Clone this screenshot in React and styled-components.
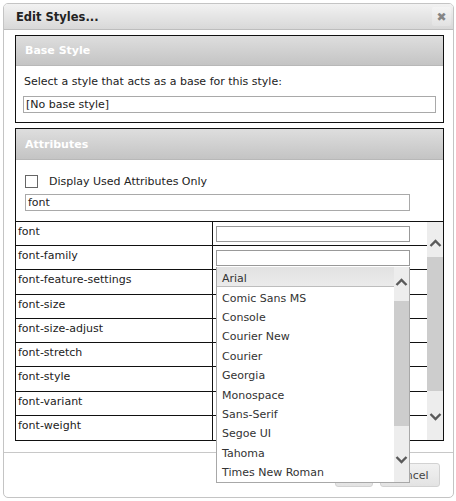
import React from 'react';
import styled, {createGlobalStyle} from 'styled-components';

const ATTRIBUTES = [
    'font',
    'font-family',
    'font-feature-settings',
    'font-size',
    'font-size-adjust',
    'font-stretch',
    'font-style',
    'font-variant',
    'font-weight',
];

const FONTS = [
    'Arial',
    'Comic Sans MS',
    'Console',
    'Courier New',
    'Courier',
    'Georgia',
    'Monospace',
    'Sans-Serif',
    'Segoe UI',
    'Tahoma',
    'Times New Roman',
];

const Chevron = ({down}) => (
    <svg width="13" height="9" viewBox="0 0 13 9">
        <path d={down ? 'M1.5 2 L6.5 7 L11.5 2' : 'M1.5 7 L6.5 2 L11.5 7'}
              fill="none" stroke="#5a5a5a" strokeWidth="2.4"/>
    </svg>
);

const App = () => {
    return (
        <>
            <GlobalStyle/>
            <Dialog>
                <TitleBar>
                    <Title>Edit Styles...</Title>
                    <CloseButton>&#x2716;</CloseButton>
                </TitleBar>
                <Content>
                    <Panel>
                        <PanelHeader height={30}>Base Style</PanelHeader>
                        <BaseBody>
                            <Label>Select a style that acts as a base for this style:</Label>
                            <TextBox width={413}>[No base style]</TextBox>
                        </BaseBody>
                    </Panel>
                    <Panel>
                        <PanelHeader height={31}>Attributes</PanelHeader>
                        <FilterBody>
                            <CheckRow>
                                <CheckBox/>
                                <span>Display Used Attributes Only</span>
                            </CheckRow>
                            <TextBox width={385}>font</TextBox>
                        </FilterBody>
                        <TableArea>
                            <Rows>
                                {ATTRIBUTES.map((name, i) => (
                                    <Row key={name} last={i === ATTRIBUTES.length - 1}>
                                        <NameCell>{name}</NameCell>
                                        <ValueCell>
                                            {i < 2 && <ValueInput/>}
                                            {name === 'font-family' && (
                                                <DropList>
                                                    <Options>
                                                        {FONTS.map((font, j) => (
                                                            <Option key={font} selected={j === 0}>{font}</Option>
                                                        ))}
                                                    </Options>
                                                    <ScrollBar>
                                                        <Arrow size={34} pad="0 0 4px">
                                                            <Chevron/>
                                                        </Arrow>
                                                        <Track>
                                                            <Thumb style={{height: 125}}/>
                                                        </Track>
                                                        <Arrow size={38} pad="0 0 8px">
                                                            <Chevron down/>
                                                        </Arrow>
                                                    </ScrollBar>
                                                </DropList>
                                            )}
                                        </ValueCell>
                                    </Row>
                                ))}
                            </Rows>
                            <ScrollBar wide>
                                <Arrow size={35} pad="8px 0 0">
                                    <Chevron/>
                                </Arrow>
                                <Track>
                                    <Thumb style={{height: 134}}/>
                                </Track>
                                <Arrow size={36} pad="0 0 10px">
                                    <Chevron down/>
                                </Arrow>
                            </ScrollBar>
                        </TableArea>
                    </Panel>
                </Content>
                <Footer>
                    <Button width={38}>OK</Button>
                    <Button width={60}>Cancel</Button>
                </Footer>
            </Dialog>
        </>
    );
};

const GlobalStyle = createGlobalStyle`
  *, *::before, *::after {
    box-sizing: border-box;
  }

  body {
    margin: 0;
    background: #fff;
    font-family: "DejaVu Sans", Verdana, sans-serif;
    font-size: 11px;
    color: #222;
  }
`;

const Dialog = styled.div`
  margin: 3px;
  width: 451px;
  height: 495px;
  border: 1px solid #c4c4c4;
  border-radius: 5px;
  background: #fff;
  display: flex;
  flex-direction: column;
`;

const TitleBar = styled.div`
  height: 26px;
  border-bottom: 1px solid #bdbdbd;
  border-radius: 4px 4px 0 0;
  background: linear-gradient(#f2f2f2, #d8d8d8);
  display: flex;
  align-items: center;
  justify-content: space-between;
  padding: 0 2px 0 12px;
`;

const Title = styled.span`
  font-weight: bold;
  font-size: 11.5px;
  color: #222;
`;

const CloseButton = styled.span`
  width: 19px;
  height: 19px;
  background: linear-gradient(#f4f4f4, #e2e2e2);
  border-radius: 2px;
  color: #858585;
  font-size: 12px;
  display: flex;
  align-items: center;
  justify-content: center;
`;

const Content = styled.div`
  padding: 5px 9px 0 11px;
  display: flex;
  flex-direction: column;
  gap: 5px;
`;

const Panel = styled.div`
  border: 1px solid #111;
`;

const PanelHeader = styled.div`
  height: ${props => props.height}px;
  border-bottom: 1px solid #b8b8b8;
  background: linear-gradient(#dedede, #c4c4c4);
  color: #fff;
  font-weight: bold;
  font-size: 11px;
  display: flex;
  align-items: center;
  padding-left: 9px;
`;

const BaseBody = styled.div`
  padding: 9px 7px 9px 7px;
  display: flex;
  flex-direction: column;
  gap: 7px;
`;

const Label = styled.div`
  line-height: 14px;
  padding-left: 1px;
`;

const TextBox = styled.div`
  width: ${props => props.width}px;
  height: 17px;
  border: 1px solid #a9a9a9;
  padding-left: 2px;
  line-height: 15px;
`;

const FilterBody = styled.div`
  padding: 15px 7px 10px 9px;
  display: flex;
  flex-direction: column;
  gap: 6px;
`;

const CheckRow = styled.div`
  display: flex;
  align-items: center;
  gap: 11px;
  height: 13px;
`;

const CheckBox = styled.span`
  width: 13px;
  height: 13px;
  border: 1px solid #666;
  background: #fff;
`;

const TableArea = styled.div`
  display: flex;
  border-top: 1px solid #111;
`;

const Rows = styled.div`
  flex: 1;
`;

const Row = styled.div`
  height: 24.22px;
  display: grid;
  grid-template-columns: 197px 1fr;
  border-bottom: ${props => props.last ? 'none' : '1px solid #111'};
`;

const NameCell = styled.div`
  border-right: 1px solid #111;
  padding: 3px 0 0 2px;
  line-height: 14px;
`;

const ValueCell = styled.div`
  position: relative;
  padding: 4px 0 0 3px;
`;

const ValueInput = styled.div`
  width: 194px;
  height: 16px;
  border: 1px solid #999;
  background: #fff;
`;

const DropList = styled.div`
  position: absolute;
  left: 3px;
  top: 21px;
  width: 194px;
  height: 216px;
  border: 1px solid #a8a8a8;
  border-top: none;
  background: #fff;
  display: flex;
  z-index: 2;
`;

const Options = styled.div`
  flex: 1;
`;

const Option = styled.div`
  height: 19.4px;
  padding: 2px 0 0 5px;
  line-height: 19px;
  color: #333;
  background: ${props => props.selected ? 'linear-gradient(#e2e2e2, #ebebeb)' : 'transparent'};
  border-bottom: ${props => props.selected ? '1px solid #bdbdbd' : 'none'};
`;

const ScrollBar = styled.div`
  width: ${props => props.wide ? 16 : 15}px;
  background: #ededed;
  display: flex;
  flex-direction: column;
`;

const Arrow = styled.div`
  height: ${props => props.size}px;
  padding: ${props => props.pad};
  display: flex;
  align-items: center;
  justify-content: center;
`;

const Track = styled.div`
  flex: 1;
`;

const Thumb = styled.div`
  background: #cdcdcd;
`;

const Footer = styled.div`
  margin-top: auto;
  height: 45px;
  border-top: 1px solid #c8c8c8;
  display: flex;
  justify-content: flex-end;
  align-items: flex-start;
  gap: 7px;
  padding: 10px 13px 0 0;
`;

const Button = styled.div`
  width: ${props => props.width}px;
  height: 24px;
  border: 1px solid #d2d2d2;
  border-radius: 3px;
  background: linear-gradient(#f1f1f1, #e3e3e3);
  font-size: 11px;
  color: #444;
  display: flex;
  align-items: center;
  justify-content: center;
`;

export default App;
